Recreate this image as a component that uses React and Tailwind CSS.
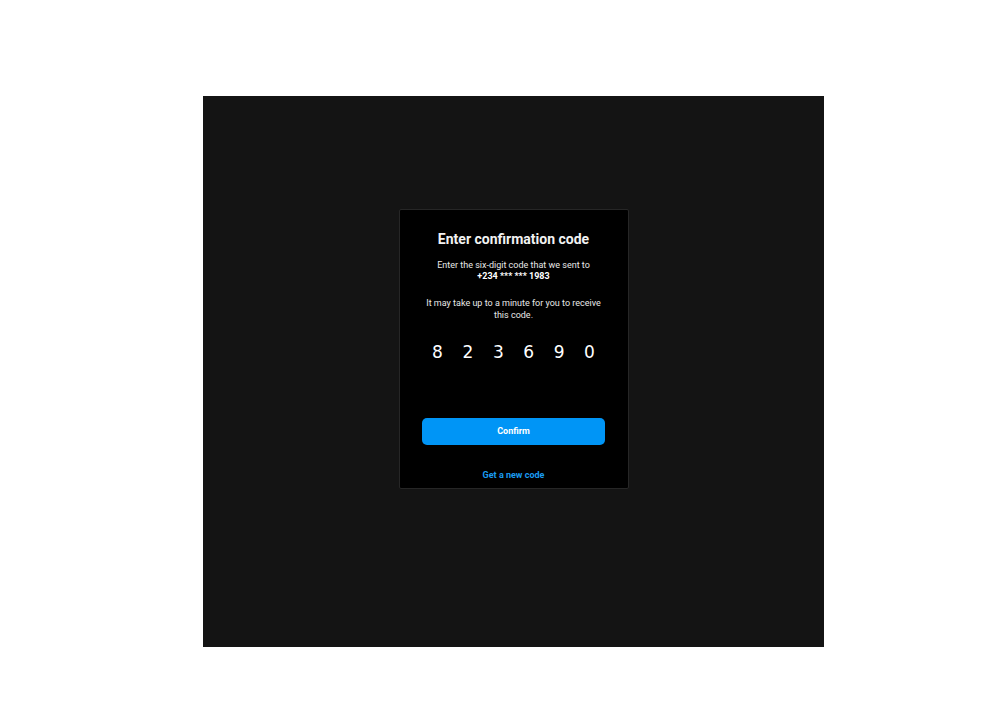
import React from "react";

export default function App() {
  const digits = ["8", "2", "3", "6", "9", "0"];
  return (
    <div className="w-[1000px] h-[720px] bg-white pt-[96px] pl-[203px]" style={{ fontFamily: "Roboto, 'Liberation Sans', sans-serif" }}>
      <div className="w-[621px] h-[551px] bg-[#141414] pt-[113px] flex flex-col items-center">
        <div className="w-[230px] h-[280px] bg-black border border-[#262626] rounded-[2px] px-[22px] pt-[21px] flex flex-col items-center">
          <h1 className="text-[14px] leading-[17px] font-bold text-[#f2f2f2] text-center">Enter confirmation code</h1>
          <p className="mt-[12px] text-[9px] leading-[11px] text-[#e8e8e8] text-center">
            Enter the six-digit code that we sent to
            <br />
            <span className="font-bold text-white">+234 *** *** 1983</span>
          </p>
          <p className="mt-[15px] text-[9px] leading-[12px] text-[#e8e8e8] text-center px-[2px]">
            It may take up to a minute for you to receive this code.
          </p>
          <div className="mt-[19px] flex justify-center gap-0">
            {digits.map((d, i) => (
              <span key={i} className="w-[30.4px] text-center text-[17px] leading-[24px] text-white" style={{ fontFamily: "'DejaVu Sans', sans-serif" }}>
                {d}
              </span>
            ))}
          </div>
          <button className="mt-[54px] w-[183px] h-[27px] rounded-[5px] bg-[#0095f6] text-white text-[9px] font-bold">
            Confirm
          </button>
          <a className="mt-[24px] text-[9px] leading-[12px] font-bold text-[#1a9bf0]">Get a new code</a>
        </div>
      </div>
    </div>
  );
}
